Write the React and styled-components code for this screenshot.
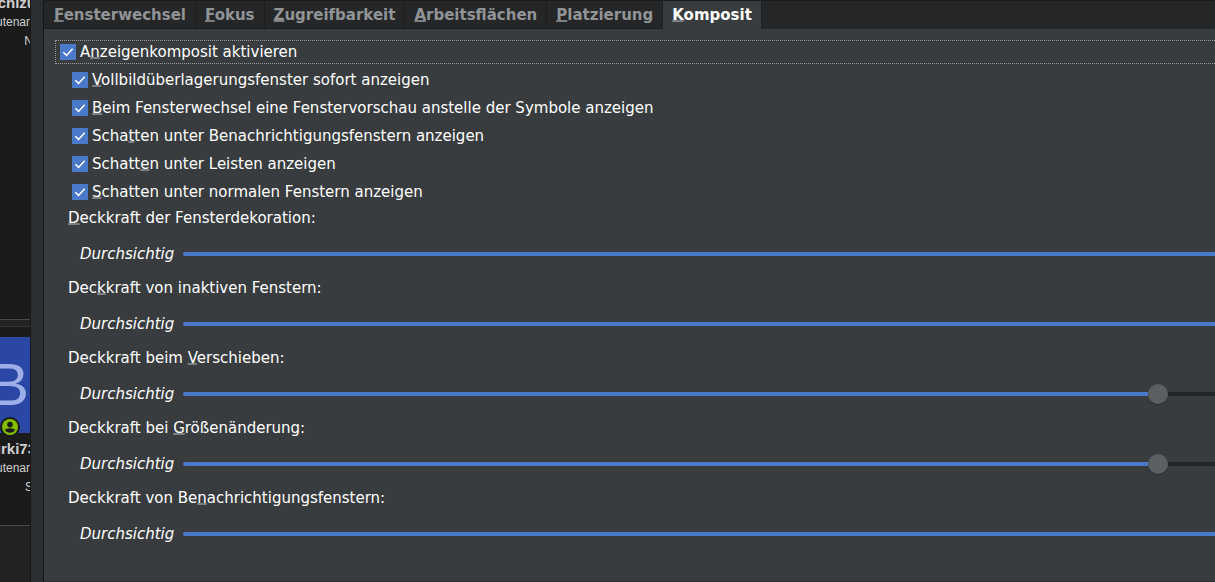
import { useState } from "react";
import styled, { createGlobalStyle } from "styled-components";

const tabs = ["Fensterwechsel", "Fokus", "Zugreifbarkeit", "Arbeitsflächen", "Platzierung", "Komposit"];

// "_" stands before the mnemonic letter
const options = [
  "_Vollbildüberlagerungsfenster sofort anzeigen",
  "_Beim Fensterwechsel eine Fenstervorschau anstelle der Symbole anzeigen",
  "Scha_tten unter Benachrichtigungsfenstern anzeigen",
  "Schatt_en unter Leisten anzeigen",
  "_Schatten unter normalen Fenstern anzeigen",
];

const opacities = [
  { id: "decoration", label: "_Deckkraft der Fensterdekoration:", value: 100 },
  { id: "inactive", label: "Dec_kkraft von inaktiven Fenstern:", value: 100 },
  { id: "move", label: "Deckkraft beim _Verschieben:", value: 90 },
  { id: "resize", label: "Deckkraft bei _Größenänderung:", value: 90 },
  { id: "popup", label: "Deckkraft von Be_nachrichtigungsfenstern:", value: 100 },
];

function Mnemonic({ text }) {
  const [before, after] = text.split("_");
  return (
    <span>
      {before}
      <Key>{after[0]}</Key>
      {after.slice(1)}
    </span>
  );
}

function CheckRow({ text, focused }) {
  const [checked, setChecked] = useState(true);
  return (
    <CheckLabel $focused={focused}>
      <Check>
        <input type="checkbox" checked={checked} onChange={() => setChecked(!checked)} />
        <svg viewBox="0 0 16 16" aria-hidden="true">
          <path d="M3.3 8.3 6.6 11.4 12.6 4.8" />
        </svg>
      </Check>
      <Mnemonic text={text} />
    </CheckLabel>
  );
}

function OpacityRow({ id, label, value }) {
  const [current, setCurrent] = useState(value);
  return (
    <Opacity>
      <label htmlFor={id}>
        <Mnemonic text={label} />
      </label>
      <Scale>
        <em>Durchsichtig</em>
        <Slider
          id={id}
          type="range"
          value={current}
          onChange={(e) => setCurrent(e.target.value)}
          style={{ "--fill": `${current}%` }}
        />
      </Scale>
    </Opacity>
  );
}

function App() {
  const [active, setActive] = useState("Komposit");

  return (
    <Desktop>
      <GlobalStyle />
      <Forum>
        <Post $tall>
          <Name>lachizu</Name>
          <Rank>Lieutenant</Rank>
          <Rank>N</Rank>
        </Post>
        <Gap />
        <Post>
          <Avatar>
            B
            <Online>
              <svg viewBox="0 0 20 20" aria-hidden="true">
                <circle cx="10" cy="10" r="10" fill="#1b1b1b" />
                <circle cx="10" cy="10" r="8" fill="#84bd00" />
                <circle cx="10" cy="7.6" r="2.8" fill="#1b1b1b" />
                <path d="M4.8 12.8a5.6 2.6 0 0 1 10.4 0 6 6 0 0 1-10.4 0z" fill="#1b1b1b" />
              </svg>
            </Online>
          </Avatar>
          <Name>Burki73</Name>
          <Rank>Lieutenant</Rank>
          <Rank>S</Rank>
        </Post>
      </Forum>
      <Dialog>
        <TabBar role="tablist">
          {tabs.map((tab) => (
            <Tab key={tab} role="tab" aria-selected={tab === active} $active={tab === active} onClick={() => setActive(tab)}>
              <Mnemonic text={"_" + tab} />
            </Tab>
          ))}
        </TabBar>
        <Panel role="tabpanel">
          <CheckRow text="A_nzeigenkomposit aktivieren" focused />
          <Options>
            {options.map((text) => (
              <CheckRow key={text} text={text} />
            ))}
          </Options>
          {opacities.map((item) => (
            <OpacityRow key={item.id} {...item} />
          ))}
        </Panel>
      </Dialog>
    </Desktop>
  );
}

const GlobalStyle = createGlobalStyle`
  * {
    box-sizing: border-box;
  }
  body {
    margin: 0;
    background: #222;
  }
`;

const Desktop = styled.div`
  display: flex;
  min-height: 100vh;
  overflow: hidden;
  background: #222;
`;

const Forum = styled.aside`
  flex: 0 0 30px;
  min-width: 0;
  overflow: hidden;
  font-family: "Liberation Sans", Arial, sans-serif;
  color: #d0d0d0;
`;

const Post = styled.div`
  display: flex;
  flex-direction: column;
  align-items: flex-end;
  height: ${({ $tall }) => ($tall ? 320 : 199)}px;
  margin-right: -6px;
  padding-top: ${({ $tall }) => ($tall ? 0 : 10)}px;
  background: #1b1b1b;
  border-bottom: 1px solid #4a4a4a;

  > strong:first-child {
    margin-top: -7px;
  }
`;

const Gap = styled.div`
  height: 7px;
  border-bottom: 1px solid #333;
`;

const Avatar = styled.div`
  position: relative;
  width: 96px;
  height: 96px;
  margin: 0 6px 6px 0;
  padding-right: 1px;
  background: #2a47a5;
  color: #9daee8;
  font-size: 60px;
  line-height: 96px;
  text-align: right;
`;

const Online = styled.span`
  position: absolute;
  right: 10px;
  bottom: -4px;
  width: 20px;
  height: 20px;
  line-height: 0;
`;

const Name = styled.strong`
  font-size: 15px;
  line-height: 20px;
`;

const Rank = styled.span`
  font-size: 12px;
  line-height: 19px;

  &:last-child {
    margin-right: 3px;
  }
`;

const Dialog = styled.main`
  flex: 1;
  display: flex;
  flex-direction: column;
  margin-right: -60px;
  padding-left: 12px;
  border-left: 1px solid #16181a;
  background: #2b2f31;
  color: #fff;
  font-family: "DejaVu Sans", sans-serif;
  font-size: 15px;
`;

const TabBar = styled.div`
  display: flex;
  height: 29px;
  padding-left: 1px;
  border-top: 1px solid #191b1c;
  border-left: 1px solid #131516;
  background: #242628;
`;

const Tab = styled.button`
  padding: 0 9px;
  border: 0;
  border-right: 1px solid #1c1e1f;
  border-bottom: 1px solid ${({ $active }) => ($active ? "#383c3e" : "#1c1e1f")};
  background: ${({ $active }) => ($active ? "#383c3e" : "transparent")};
  color: ${({ $active }) => ($active ? "#fff" : "#919496")};
  font: bold 15px "DejaVu Sans", sans-serif;
`;

const Panel = styled.div`
  flex: 1;
  padding: 11px 0 16px 11px;
  border-left: 1px solid #131516;
  border-bottom: 1px solid #2b2f31;
  background: #383c3e;
`;

const Options = styled.div`
  padding-left: 12px;
`;

const CheckLabel = styled.label`
  display: flex;
  align-items: center;
  gap: 4px;
  height: 24px;
  margin-bottom: 4px;
  padding-left: 4px;
  border: 1px dotted ${({ $focused }) => ($focused ? "#989b9c" : "transparent")};
  white-space: nowrap;
`;

const Check = styled.span`
  display: grid;
  width: 16px;
  height: 16px;

  input,
  svg {
    grid-area: 1 / 1;
    width: 16px;
    height: 16px;
    margin: 0;
  }
  input {
    appearance: none;
    background: #222527;
  }
  input:checked {
    background: #4a79c9;
  }
  svg {
    fill: none;
    stroke: #fff;
    stroke-width: 1.5;
    pointer-events: none;
  }
  input:not(:checked) + svg {
    visibility: hidden;
  }
`;

const Key = styled.span`
  text-decoration: underline 2px #7c8082;
  text-underline-offset: 0;
  text-decoration-skip-ink: none;
`;

const Opacity = styled.div`
  height: 70px;
  padding-left: 13px;
  line-height: 20px;
`;

const Scale = styled.div`
  display: flex;
  align-items: center;
  gap: 9px;
  height: 20px;
  margin: 16px 0 0 12px;
`;

const Slider = styled.input`
  flex: 1;
  height: 20px;
  margin: 0;
  appearance: none;
  background: transparent;

  &::-webkit-slider-runnable-track {
    height: 4px;
    border-radius: 2px;
    background: linear-gradient(to right, #4a79c9 var(--fill), #222527 var(--fill));
  }
  &::-webkit-slider-thumb {
    appearance: none;
    width: 20px;
    height: 20px;
    margin-top: -8px;
    border-radius: 50%;
    background: #5a5f61;
    box-shadow: 0 1px 1px #2b2f31;
  }
`;

export default App;
